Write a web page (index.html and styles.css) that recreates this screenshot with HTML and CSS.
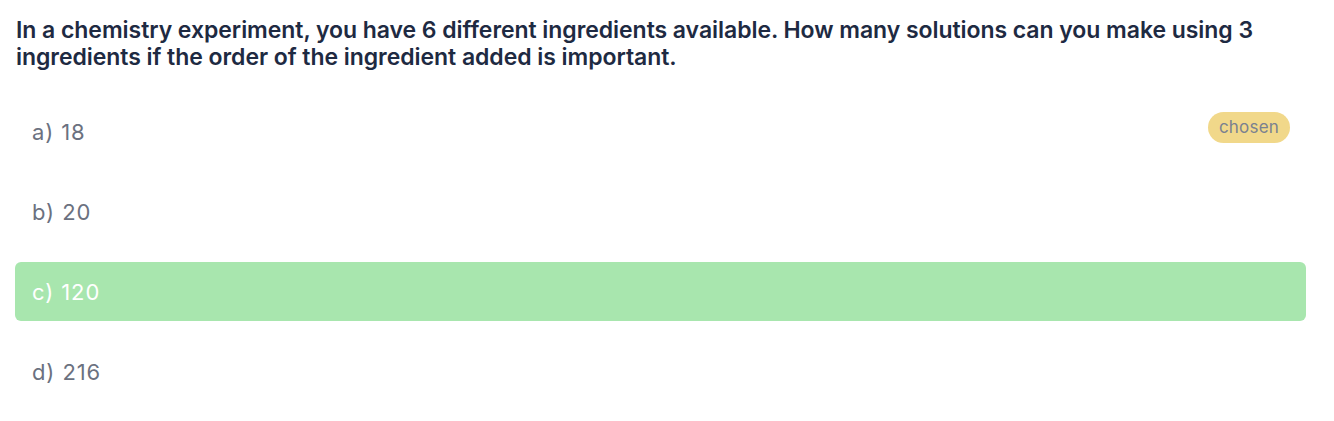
FILE: index.html
```html
<!DOCTYPE html>
<html>
<head>
<meta charset="utf-8">
<link rel="stylesheet" href="styles.css">
</head>
<body>
<div class="quiz">
  <h1 class="question">In a chemistry experiment, you have 6 different ingredients available. How many solutions can you make using 3 ingredients if the order of the ingredient added is important.</h1>
  <ul class="options">
    <li class="option"><span>a) 18</span><span class="badge">chosen</span></li>
    <li class="option"><span>b) 20</span></li>
    <li class="option correct"><span>c) 120</span></li>
    <li class="option"><span>d) 216</span></li>
  </ul>
</div>
</body>
</html>
```
FILE: styles.css
```css
html, body { margin: 0; padding: 0; background: #fff; }
body { font-family: "Inter", "Noto Sans", sans-serif; }
.quiz { padding: 17px 28px 0 15px; }
.question {
  margin: 0 0 0 1px;
  font-size: 23px;
  line-height: 27px;
  font-weight: 600;
  color: #1e2a42;
  letter-spacing: -0.05px;
}
.options { list-style: none; margin: 31px 0 0; padding: 0; display: flex; flex-direction: column; gap: 21px; }
.option {
  height: 59px;
  display: flex;
  align-items: center;
  justify-content: space-between;
  padding: 0 16px 0 17px;
  border-radius: 6px;
  font-size: 22px;
  letter-spacing: 0.9px;
  color: #6b7180;
}
.option.correct { background: #a8e6ae; color: #ffffff; }
.badge {
  background: #f1d88a;
  color: #7a8190;
  font-size: 17px;
  letter-spacing: 0.2px;
  height: 31px;
  line-height: 31px;
  padding: 0 11px;
  border-radius: 16px;
  margin-bottom: 8px;
}
```
